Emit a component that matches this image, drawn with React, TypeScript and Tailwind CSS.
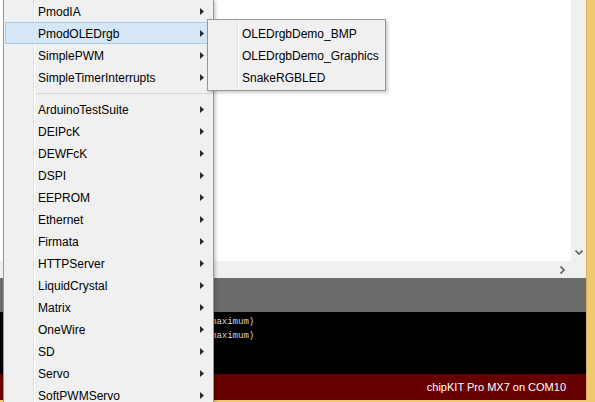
const mainItems = [
  'PmodIA',
  'PmodOLEDrgb',
  'SimplePWM',
  'SimpleTimerInterrupts',
  '-',
  'ArduinoTestSuite',
  'DEIPcK',
  'DEWFcK',
  'DSPI',
  'EEPROM',
  'Ethernet',
  'Firmata',
  'HTTPServer',
  'LiquidCrystal',
  'Matrix',
  'OneWire',
  'SD',
  'Servo',
  'SoftPWMServo',
];

const subItems = ['OLEDrgbDemo_BMP', 'OLEDrgbDemo_Graphics', 'SnakeRGBLED'];

function Arrow() {
  return (
    <svg width="4" height="7" viewBox="0 0 4 7" className="block">
      <path d="M0 0 L4 3.5 L0 7 Z" fill="#2b2b2b" />
    </svg>
  );
}

export default function App() {
  const uiFont = { fontFamily: '"Liberation Sans", Arial, sans-serif' };

  return (
    <div className="relative w-[595px] h-[402px] overflow-hidden bg-[#f0c96f] flex">
      {/* IDE window */}
      <div className="w-[587px] h-[400px] flex flex-col border-r border-[#d8b25a]">
        <div className="h-[261px] flex">
          <div className="flex-1 bg-white" />
          <div className="w-[15px] bg-[#f0f0f0] flex flex-col justify-end items-center pb-[6px]">
            <svg width="8" height="5" viewBox="0 0 8 5">
              <path d="M0.5 0.5 L4 4 L7.5 0.5" stroke="#606060" strokeWidth="1.6" fill="none" />
            </svg>
          </div>
        </div>
        <div className="h-[17px] bg-[#f0f0f0] flex items-center justify-end pr-[21px]">
          <svg width="5" height="8" viewBox="0 0 5 8">
            <path d="M0.5 0.5 L4 4 L0.5 7.5" stroke="#606060" strokeWidth="1.6" fill="none" />
          </svg>
        </div>
        <div className="h-[34px] bg-[#6b6b6b]" />
        {/* console: the start of each line sits under the menu */}
        <div
          className="h-[62px] bg-black pt-[5px] pl-[211px] flex flex-col gap-[4px] text-[9px] leading-[10px] text-[#d6d6d6] whitespace-pre"
          style={{ fontFamily: '"Liberation Mono", "DejaVu Sans Mono", monospace' }}
        >
          <div>maximum)</div>
          <div>maximum)</div>
        </div>
        <div
          className="h-[26px] bg-[#660000] flex items-center justify-end pr-[20px] text-white text-[11px]"
          style={{ fontFamily: '"Liberation Sans", Arial, sans-serif' }}
        >
          chipKIT Pro MX7 on COM10
        </div>
      </div>

      {/* Examples menu */}
      <div
        className="absolute left-[3px] top-[-1px] w-[211px] h-[420px] bg-[#f0f0f0] border border-[#979797] shadow-[2px_2px_3px_rgba(0,0,0,0.2)] text-[12px] text-black"
        style={uiFont}
      >
        <div className="absolute left-[29px] top-0 bottom-0 w-[1px] bg-[#e2e2e2]" />
        <div className="absolute left-[30px] top-0 bottom-0 w-[1px] bg-white" />
        <div className="relative flex flex-col px-[1px]">
          {mainItems.map((item, i) =>
            item === '-' ? (
              <div key={i} className="h-[10px] flex items-center pl-[31px] pr-[2px]">
                <div className="flex-1 h-[1px] bg-[#d7d7d7]" />
              </div>
            ) : (
              <div
                key={i}
                className={
                  item === 'PmodOLEDrgb'
                    ? 'h-[22px] flex items-center pl-[32px] pr-[7px] bg-[#d5e6f7] border border-[#a6cdef]'
                    : 'h-[22px] flex items-center pl-[32px] pr-[7px] border border-transparent'
                }
              >
                <span className="flex-1 pt-[1px]">{item}</span>
                <Arrow />
              </div>
            ),
          )}
        </div>
      </div>

      {/* PmodOLEDrgb submenu */}
      <div
        className="absolute left-[207px] top-[19px] w-[179px] h-[72px] bg-[#f0f0f0] border border-[#979797] shadow-[2px_2px_3px_rgba(0,0,0,0.2)] text-[12px] text-black"
        style={uiFont}
      >
        <div className="absolute left-[29px] top-0 bottom-0 w-[1px] bg-[#e2e2e2]" />
        <div className="absolute left-[30px] top-0 bottom-0 w-[1px] bg-white" />
        <div className="relative flex flex-col pt-[2px]">
          {subItems.map((item) => (
            <div key={item} className="h-[22px] flex items-center pl-[34px] pt-[1px]">
              {item}
            </div>
          ))}
        </div>
      </div>
    </div>
  );
}
